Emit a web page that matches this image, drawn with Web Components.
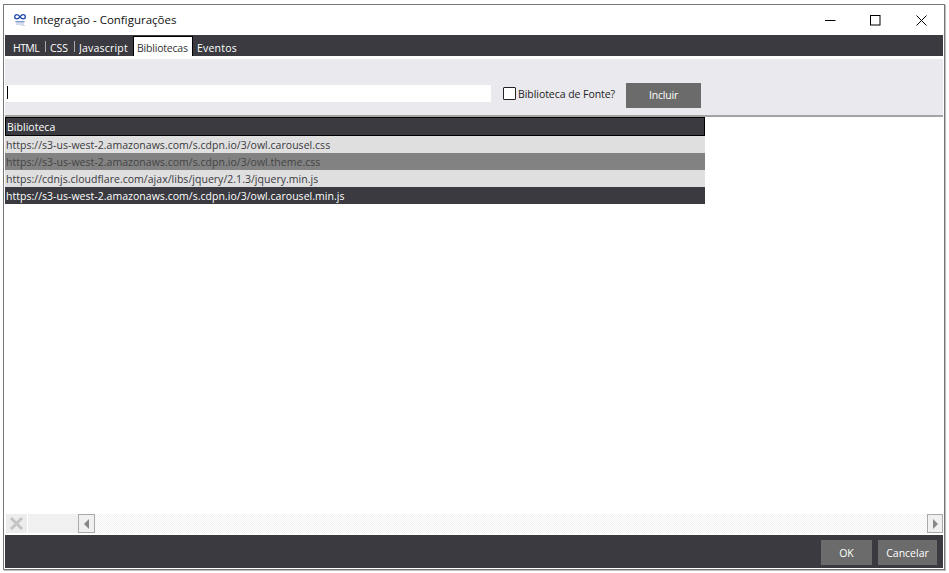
<!DOCTYPE html>
<html lang="pt"><head><meta charset="utf-8"><title>Integração - Configurações</title>
<style>
html,body{margin:0;height:100%;background:#fff}
body{padding:4px 4px 3px 3px;box-sizing:border-box;height:573px;overflow:hidden;font-family:"Open Sans","Noto Sans",sans-serif}
</style></head><body>
<cfg-window></cfg-window>
<script>
function def(name,css,html){
  customElements.define(name,class extends HTMLElement{
    constructor(){super();const s=this.attachShadow({mode:'open'});s.innerHTML='<style>'+css+'</style>'+html;}
  });
}
def('title-bar',`
:host{display:flex;align-items:center;height:30px;background:#fff;color:#111;font:11.5px "Open Sans",sans-serif;flex:none}
svg{display:block;flex:none}
.logo{margin:0 7px 0 9px}
.t{flex:1;padding-bottom:1px}
.c{display:flex;align-items:center;gap:34px;margin-right:16px}
.c svg+svg+svg{margin-left:1px}
`,`
<svg class="logo" width="12" height="12" viewBox="0 0 12 12"><path d="M6 3C5 1.300 3.900 .7 2.800 .7 1.400 .7 .7 1.700 .7 2.800S1.400 4.900 2.800 4.900C3.900 4.900 5 4.300 6 2.800 7 1.300 8.100 .7 9.200 .7 10.600 .7 11.300 1.700 11.300 2.800S10.600 4.900 9.200 4.900C8.100 4.900 7 4.300 6 2.600" fill="none" stroke="#1c46a8" stroke-width="1.300"/><rect x="1.500" y="7" width="9" height="1.500" fill="#7e9ccf"/><rect x="2" y="9.500" width="8" height="1" fill="#a9bbdb"/><rect x="7" y="11" width="4" height="1" fill="#d0d8e8"/></svg>
<span class="t"><slot></slot></span>
<div class="c">
<svg width="11" height="11"><path d="M0 5.500H10.500" stroke="#000"/></svg>
<svg width="11" height="11"><rect x=".5" y=".5" width="9.500" height="9.500" fill="none" stroke="#000"/></svg>
<svg width="11" height="11"><path d="M.5 .5L10.500 10.500M10.500 .5L.5 10.500" stroke="#000"/></svg>
</div>
`);
def('tab-bar',`
:host{display:flex;align-items:flex-end;height:21px;background:#3a3a40;padding-left:8px;flex:none;box-sizing:border-box}
`,`<slot></slot>`);
def('tab-item',`
:host{display:block;height:20px;color:#fff;font:10.5px/25px "Open Sans",sans-serif;box-sizing:border-box;white-space:nowrap;overflow:hidden}
:host([active]){background:#fff;color:#333;border:1px solid #000;border-bottom:0;line-height:23px}
`,`<slot></slot>`);
def('tab-sep',`:host{display:block;width:1px;height:11px;background:#aaa;margin:0 0 4px 0}`,``);
def('tool-bar',`
:host{display:flex;align-items:flex-start;height:58px;margin-top:3px;background:#e9e9ee;border-bottom:2px solid #a3a3a3;box-sizing:border-box;flex:none;font:10.5px/14px "Open Sans",sans-serif;color:#222}
.in{width:486px;height:17px;margin:26px 12px 0 0;background:#fff;display:flex}
.in i{display:block;width:1px;height:13px;background:#000;margin:1px 0 0 2px}
.box{width:13px;height:13px;box-sizing:border-box;border:1px solid #222;background:#fff;border-radius:1px;margin:28px 2px 0 0}
.l{width:108px;margin-top:28px;letter-spacing:-.05px}
.btn{width:75px;height:25px;margin-top:24px;padding-bottom:2px;box-sizing:border-box;background:#6b6b6b;color:#fff;display:flex;align-items:center;justify-content:center;letter-spacing:-.2px}
`,`<div class="in"><i></i></div><div class="box"></div><span class="l">Biblioteca de Fonte?</span><div class="btn">Incluir</div>`);
def('lib-table',`
:host{display:block;width:700px;font:10.5px/19px "Open Sans",sans-serif;letter-spacing:.03px}
`,`<slot></slot>`);
def('lib-row',`
:host{display:block;height:17px;padding-left:1px;white-space:nowrap;background:#dfdfdf;color:#3a3a40;box-sizing:border-box;overflow:hidden}
:host([kind=head]){height:19px;background:#3a3a40;color:#fff;border:1px solid #000;line-height:18px}
:host([kind=sel]){background:#828282;color:#444}
:host([kind=dark]){background:#3a3a40;color:#fff}
`,`<slot></slot>`);
def('h-scroll',`
:host{display:flex;height:19px;margin-left:1px;background:#fff;flex:none;box-sizing:border-box}
.x{width:21px;background:#ececec;display:flex;align-items:center;justify-content:center;margin-right:1px}
.trk{width:50px;background:#f0f0f0}
.btn{height:19px;border:1px solid #aaa;box-sizing:border-box;background:#f0f0f0;display:flex;align-items:center;justify-content:center}
.h{flex:1;background:repeating-conic-gradient(#f2f2f2 0 25%,#fff 0 50%) 0 0/2px 2px}
`,`<div class="x"><svg width="15" height="15"><path d="M2 2L13 13M13 2L2 13" stroke="#c4c4c4" stroke-width="3"/></svg></div><div class="trk"></div>
<div class="btn" style="width:17px"><svg width="6" height="10"><path d="M5 0V10L0 5Z" fill="#888"/></svg></div><div class="h"></div>
<div class="btn" style="width:16px"><svg width="6" height="10"><path d="M1 0V10L6 5Z" fill="#888"/></svg></div>`);
def('foot-bar',`
:host{display:flex;align-items:flex-start;justify-content:flex-end;gap:6px;height:33px;background:#3a3a40;padding:5px 6px 0 0;flex:none;margin-top:2px;box-sizing:border-box}
`,`<slot></slot>`);
def('foot-btn',`
:host{display:flex;align-items:center;justify-content:center;height:25px;background:#6b6b6b;color:#fff;font:10.5px "Open Sans",sans-serif}
`,`<slot></slot>`);
def('cfg-window',`
:host{display:flex;flex-direction:column;height:566px;box-sizing:border-box;border:1px solid #777;padding:0 1px 1px 1px;background:#fff;overflow:hidden;box-shadow:1px 1px 0 #bdbdbd}
main{flex:1;min-height:0}
`,`
<title-bar>Integração - Configurações</title-bar>
<tab-bar>
<tab-item style="width:32px;letter-spacing:-.6px">HTML</tab-item><tab-sep></tab-sep>
<tab-item style="margin-left:4px;width:24px">CSS</tab-item><tab-sep></tab-sep>
<tab-item style="margin-left:4px;width:54px;letter-spacing:.2px">Javascript</tab-item>
<tab-item active style="width:60px;padding-left:3px;letter-spacing:-.2px">Bibliotecas</tab-item>
<tab-item style="margin-left:4px;letter-spacing:.2px">Eventos</tab-item>
</tab-bar>
<tool-bar></tool-bar>
<main><lib-table>
<lib-row kind="head">Biblioteca</lib-row>
<lib-row>https://s3-us-west-2.amazonaws.com/s.cdpn.io/3/owl.carousel.css</lib-row>
<lib-row kind="sel">https://s3-us-west-2.amazonaws.com/s.cdpn.io/3/owl.theme.css</lib-row>
<lib-row>https://cdnjs.cloudflare.com/ajax/libs/jquery/2.1.3/jquery.min.js</lib-row>
<lib-row kind="dark">https://s3-us-west-2.amazonaws.com/s.cdpn.io/3/owl.carousel.min.js</lib-row>
</lib-table></main>
<h-scroll></h-scroll>
<foot-bar><foot-btn style="width:51px">OK</foot-btn><foot-btn style="width:59px">Cancelar</foot-btn></foot-bar>
`);
</script>
</body></html>
